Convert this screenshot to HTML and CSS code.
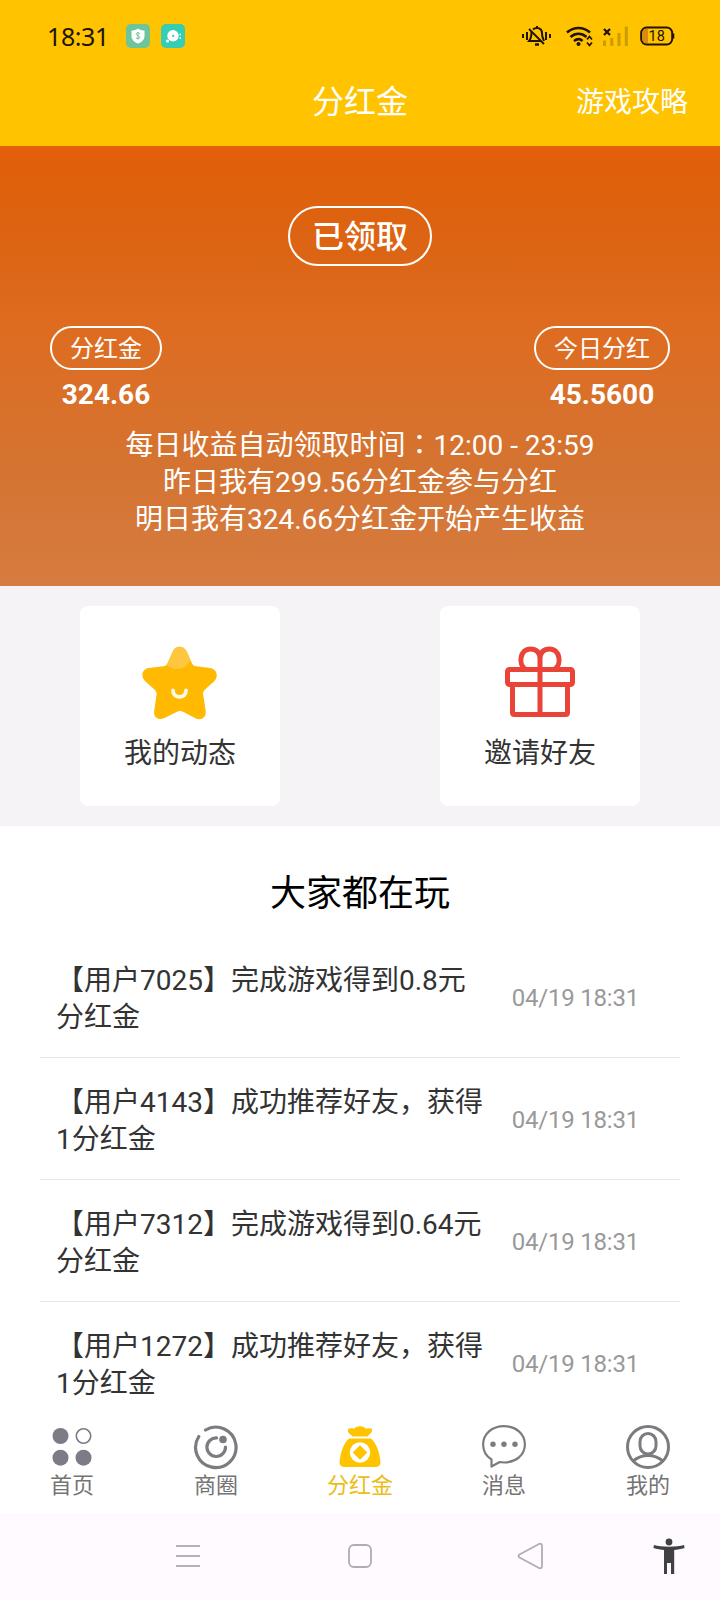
FILE: index.html
```html
<!DOCTYPE html>
<html lang="zh-CN">
<head>
<meta charset="utf-8">
<title>分红金</title>
<link rel="stylesheet" href="styles.css">
</head>
<body>
<div class="screen">
  <header class="header">
    <div class="status">
      <span class="clock">18:31</span>
      <svg class="app-badge" width="24" height="24" viewBox="0 0 24 24"><rect width="24" height="24" rx="5" fill="#6cc59b"/><path d="M12 4.500C14 6 16 6.500 18.500 6.500V12C18.500 15.500 16 18 12 19.500C8 18 5.500 15.500 5.500 12V6.500C8 6.500 10 6 12 4.500Z" fill="#fff"/><path d="M14 9.500C12.500 8.300 10 8.800 10.200 10.400C10.400 12 13.800 11.500 13.800 13.300C13.800 15 11 15 10 13.900M12 8V15.500" fill="none" stroke="#6cc59b" stroke-width="1"/></svg>
      <svg class="app-badge second" width="24" height="24" viewBox="0 0 24 24"><rect width="24" height="24" rx="5" fill="#35cdb4"/><circle cx="12" cy="11.800" r="5.700" fill="#fff"/><circle cx="12.200" cy="11.900" r="1.100" fill="#35cdb4"/><circle cx="6.500" cy="17" r="1.500" fill="#fff"/><path d="M18.500 10.500h1.500M18.500 14h1.500" stroke="#fff" stroke-width="1.300"/></svg>
      <svg class="status-icons" width="156" height="24" viewBox="0 0 156 24" fill="none" stroke="#221300">
        <g stroke-width="2"><path d="M3 10v4M7 8v8M26 8v8M30 10v4"/><path d="M9 5L24 20" stroke-width="1.800"/><path d="M13 5.500C14 4.500 15 4 17 4C20.500 4 22 6.500 22 9.500C22 13 23 14.500 24 17M11.500 8C11.500 12.500 11 14.500 9 17H21M17 2v2" stroke-width="2"/><path d="M15 20.500h4" stroke-width="2.500"/></g>
        <g stroke-width="2.700"><path d="M47 8.500C54 2.500 63 2.500 70 8.500M50.500 13C55.500 8.800 61.500 8.800 66.500 13M54 17C57 14.500 60 14.500 62.500 17"/></g>
        <circle cx="58.500" cy="20" r="2" fill="#221300" stroke="none"/>
        <path d="M67 15.500L69.500 12.500L72 15.500M67 18.500L69.500 21.500L72 18.500" stroke-width="1.700"/>
        <path d="M84 5L90 11M90 5L84 11" stroke-width="2.300"/>
        <g stroke="#c99c00" stroke-width="3"><path d="M84.500 16.500V22M91.800 14V22M99 9V22M106.300 2.500V22"/></g>
        <rect x="121.200" y="3.500" width="31" height="17" rx="5.500" stroke-width="2"/>
        <path d="M128 5V19H126C123.500 19 122.500 17.500 122.500 15.500V8.500C122.500 6.500 123.500 5 126 5Z" fill="#d98a10" stroke="none"/>
        <path d="M153.300 9.500v5" stroke-width="2"/>
        <text x="128.500" y="17" class="battery-text">18</text>
      </svg>
    </div>
    <div class="titlebar">
      <h1 class="title">分红金</h1>
      <a class="guide">游戏攻略</a>
    </div>
  </header>

  <section class="hero">
    <div class="claimed">已领取</div>
    <div class="stats">
      <div class="stat"><span class="pill">分红金</span><strong class="value">324.66</strong></div>
      <div class="stat"><span class="pill">今日分红</span><strong class="value">45.5600</strong></div>
    </div>
    <div class="notes">
      <p>每日收益自动领取时间<span class="colon" lang="zh-TW">：</span>12:00 - 23:59</p>
      <p>昨日我有299.56分红金参与分红</p>
      <p>明日我有324.66分红金开始产生收益</p>
    </div>
  </section>

  <section class="cards">
    <div class="card">
      <svg width="80" height="80" viewBox="0 0 80 80">
        <defs><clipPath id="star"><path d="M32.500 10C35 3 44 3 47 10L52 21.500Q53 24 56 24.300L70 26C77 27 79 34.500 74 39.500L65 47.500Q62.500 50 63.200 53L65.700 69C66.500 75.500 61 79 55.500 76.200L43.500 70Q40 68 36.500 70L24.500 76C18.500 79 13.200 75 14.200 69L16.500 53Q17 50 14.500 47.500L5.500 39.500C0 34.500 2 27 9 26L23.500 24.300Q26.500 24 27.500 21.500Z"/></clipPath></defs>
        <g clip-path="url(#star)"><rect width="80" height="80" fill="#ffb900"/><circle cx="37" cy="13" r="14" fill="#ffc740"/></g>
        <path d="M33 48.500C33 57 46 57 46 48.500" fill="none" stroke="#fff9e8" stroke-width="3.800" stroke-linecap="round"/>
      </svg>
      <span class="card-label">我的动态</span>
    </div>
    <div class="card">
      <svg width="80" height="80" viewBox="0 0 80 80" fill="none" stroke="#ea4338" stroke-width="5" stroke-linejoin="round">
        <rect x="7.500" y="27.500" width="65" height="15" rx="2"/>
        <path d="M12.500 43V70.500Q12.500 72.500 14.500 72.500H65.500Q67.500 72.500 67.500 70.500V43"/>
        <path d="M40 72V17M25 27C18 22 20 7 30.500 7C36 7 40 10 40 17C40 10 44 7 49.500 7C60 7 62 22 55 27"/>
      </svg>
      <span class="card-label">邀请好友</span>
    </div>
  </section>

  <main class="feed">
    <h2 class="feed-title">大家都在玩</h2>
    <ul class="list">
      <li class="row"><span class="message">【用户7025】完成游戏得到0.8元分红金</span><time class="time">04/19 18:31</time></li>
      <li class="row"><span class="message">【用户4143】成功推荐好友，获得1分红金</span><time class="time">04/19 18:31</time></li>
      <li class="row"><span class="message">【用户7312】完成游戏得到0.64元分红金</span><time class="time">04/19 18:31</time></li>
      <li class="row"><span class="message">【用户1272】成功推荐好友，获得1分红金</span><time class="time">04/19 18:31</time></li>
    </ul>
  </main>

  <nav class="tabs">
    <a class="tab">
      <svg width="48" height="48" viewBox="0 0 48 48" fill="#7c7c86"><circle cx="12.500" cy="13" r="8"/><circle cx="12.500" cy="34.700" r="8"/><circle cx="35.500" cy="34.700" r="8"/><circle cx="35.500" cy="13" r="7.200" fill="none" stroke="#7c7c86" stroke-width="1.600"/></svg>
      <span>首页</span>
    </a>
    <a class="tab">
      <svg width="48" height="48" viewBox="0 0 48 48" fill="none" stroke="#7c7c80" stroke-width="3.200" stroke-linecap="round"><path d="M13.500 7A20.200 20.200 0 1 1 6.800 13.500"/><path d="M24.500 14.900A9.300 9.300 0 1 0 33.500 24"/><circle cx="31" cy="16.500" r="3.800" fill="#7c7c80" stroke="none"/></svg>
      <span>商圈</span>
    </a>
    <a class="tab active">
      <svg width="48" height="48" viewBox="0 0 48 48" fill="#ffc300"><path d="M12 8.500C11 5 15 5 18 5.800C21 2.500 27 2.500 30 5.800C33 5 37 4.500 36 8C34.500 11.500 32.500 12 31.500 13.500H16.500C15.500 11.500 13 11.500 12 8.500Z"/><path d="M13 15.500H35C41 21 43.500 30 44.500 39C44.500 42.500 42.500 44 39 44H9C5.500 44 3.500 42.500 3.500 39C4.500 30 7 21 13 15.500Z"/><circle cx="24" cy="29.500" r="10.200" fill="#fff"/><path d="M24 22.200L31.300 29.500L24 36.800L16.700 29.500Z"/></svg>
      <span>分红金</span>
    </a>
    <a class="tab">
      <svg width="48" height="48" viewBox="0 0 48 48" fill="none" stroke="#7c7c80" stroke-width="2.200" stroke-linejoin="round"><path d="M11.500 36.500C6 33 3.100 28 3.100 21.500C3.100 11 12 3.100 24 3.100C36 3.100 44.900 11 44.900 21.500C44.900 32 36 39.500 24 39.500L19.800 39L11.500 43.500Z"/><g fill="#7c7c80" stroke="none"><circle cx="13" cy="21.200" r="2.700"/><circle cx="24" cy="21.200" r="2.700"/><circle cx="35" cy="21.200" r="2.700"/></g></svg>
      <span>消息</span>
    </a>
    <a class="tab">
      <svg width="48" height="48" viewBox="0 0 48 48" fill="none" stroke="#7c7c80" stroke-width="3"><circle cx="24" cy="24" r="20.500"/><rect x="16" y="10.500" width="16" height="20.500" rx="8"/><path d="M9 38C13 34.800 18 32.500 24 32.500C30 32.500 35 34.800 39 38"/></svg>
      <span>我的</span>
    </a>
  </nav>

  <footer class="system">
    <svg class="sys-icon" width="26" height="26" viewBox="0 0 26 26"><path d="M1 3h24M1 13h24M1 23h24" stroke="#b4b1b6" stroke-width="2"/></svg>
    <svg class="sys-icon" width="26" height="26" viewBox="0 0 26 26"><rect x="2" y="2" width="22" height="22" rx="5" fill="none" stroke="#b0adb2" stroke-width="1.800"/></svg>
    <svg class="sys-icon back" width="26" height="28" viewBox="0 0 26 28"><path d="M2.500 12.500L22 2Q25 1 25 4V24Q25 27 22 26L2.500 15.500Q.5 14 2.500 12.500Z" fill="none" stroke="#b0adb2" stroke-width="1.800"/></svg>
    <svg class="accessibility" width="32" height="36" viewBox="0 0 32 36" fill="#414043"><circle cx="16" cy="4" r="3.400"/><path d="M1 7C8 9.300 24 9.300 31 7L31.600 10C28 11 24 11.800 21.200 12V36H18V25H14V36H11V12C8 11.800 4 11 .4 10Z"/></svg>
  </footer>
</div>
</body>
</html>
```
FILE: styles.css
```css
* { box-sizing: border-box; margin: 0; padding: 0; }

body {
  font-family: Roboto, "Noto Sans CJK SC", sans-serif;
  font-size: 28px;
  line-height: 37px;
  color: #333;
  background: #fff;
}

.screen {
  width: 720px;
  height: 1600px;
  display: flex;
  flex-direction: column;
  overflow: hidden;
}

.header { height: 146px; flex: none; background: #ffc300; }

.status {
  height: 72px;
  padding: 0 44px 0 47px;
  display: flex;
  align-items: center;
}

.clock {
  width: 79px;
  font: 25px/30px "Noto Sans", sans-serif;
  letter-spacing: -0.4px;
  color: #221300;
}

.app-badge.second { margin-left: 11px; }
.status-icons { margin-left: auto; }
.battery-text { font: 14.5px Roboto, sans-serif; fill: #221300; stroke: none; }

.titlebar {
  height: 61px;
  padding: 0 32px;
  display: grid;
  grid-template-columns: 1fr auto 1fr;
  align-items: center;
  color: #fff;
}

.title { grid-column: 2; font-size: 32px; font-weight: 400; }
.guide { justify-self: end; }

.hero {
  height: 440px;
  flex: none;
  padding-top: 60px;
  display: flex;
  flex-direction: column;
  align-items: center;
  color: #fff;
  background: linear-gradient(#e65f0c 0, #df600a 5%, #dc6515 25%, #de6c20 42%, #d9702a 58%, #d47432 75%, #d67c40 100%);
}

.claimed {
  width: 144px;
  height: 60px;
  border: 2px solid #fff;
  border-radius: 30px;
  font-size: 32px;
  font-weight: 500;
  line-height: 58px;
  text-align: center;
}

.stats {
  width: 100%;
  margin-top: 60px;
  padding: 0 50px;
  display: flex;
  justify-content: space-between;
}

.stat { display: flex; flex-direction: column; align-items: center; }

.pill {
  height: 44px;
  padding: 0 18px;
  border: 2px solid #fff;
  border-radius: 22px;
  font-size: 24px;
  line-height: 42px;
}

.value { margin-top: 6px; font-weight: 700; }
.notes { margin-top: 14px; text-align: center; }
.colon { font-family: "Noto Sans CJK TC", sans-serif; line-height: 1; }

.cards {
  height: 240px;
  flex: none;
  padding: 20px 80px 0;
  display: flex;
  justify-content: space-between;
  background: #f6f3f7;
}

.card {
  width: 200px;
  height: 200px;
  padding-top: 36px;
  display: flex;
  flex-direction: column;
  align-items: center;
  border-radius: 8px;
  background: #fff;
}

.card-label { margin-top: 13px; }

.feed { flex: 1; min-height: 0; overflow: hidden; padding: 0 40px; }

.feed-title {
  padding: 44px 0 18px;
  font-size: 36px;
  font-weight: 400;
  line-height: 48px;
  text-align: center;
  color: #000;
}

.list { list-style: none; }

.row {
  height: 122px;
  padding: 4px 41px 0 16px;
  display: flex;
  align-items: center;
  justify-content: space-between;
  border-bottom: 1px solid #e8e8e8;
}

.message { width: 432px; }
.time { font-size: 24px; letter-spacing: -0.2px; color: #999; white-space: nowrap; }

.tabs {
  height: 101px;
  flex: none;
  padding-top: 11px;
  display: grid;
  grid-template-columns: repeat(5, 1fr);
  background: #fff;
}

.tab {
  display: flex;
  flex-direction: column;
  align-items: center;
  font-size: 22px;
  line-height: 29px;
  color: #747474;
}

.tab.active { color: #ecbd16; }

.system {
  height: 87px;
  flex: none;
  padding: 0 35px 2px 175px;
  display: flex;
  align-items: center;
  background: #fefaff;
}

.sys-icon + .sys-icon { margin-left: 146px; }
.sys-icon + .sys-icon.back { margin-left: 144px; }
.accessibility { margin-left: auto; }
```
